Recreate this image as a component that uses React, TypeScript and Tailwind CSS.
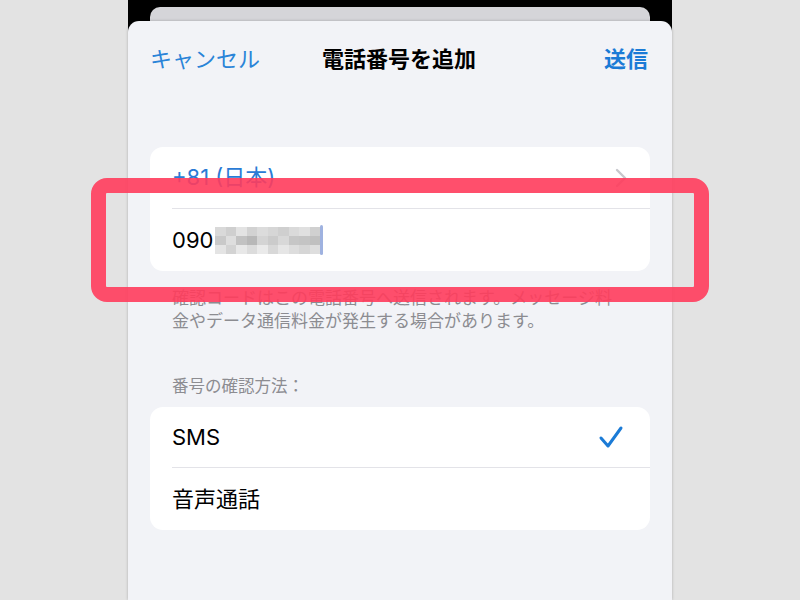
import React from 'react';

const font = { fontFamily: '"Inter", "Noto Sans CJK JP", sans-serif' };

// blurred phone digits, drawn as a mosaic of grey blocks
const mosaic = [
    ['#d9d9d9', '#cfcfcf', '#e3e3e3', '#d2d2d2', '#dcdcdc', '#d6d6d6', '#cfcfcf', '#dadada', '#e0e0e0', '#d0d0d0'],
    ['#c9c9c9', '#dedede', '#c2c2c2', '#b8b8b8', '#d4d4d4', '#cbcbcb', '#d8d8d8', '#c6c6c6', '#c4c4c4', '#c0c0c0'],
    ['#e4e4e4', '#d3d3d3', '#e8e8e8', '#dcdcdc', '#eaeaea', '#d8d8d8', '#e6e6e6', '#dddddd', '#d6d6d6', '#dedede'],
];

function Mosaic() {
    return (
        <div className="ml-[2px] flex items-center">
            <div className="flex flex-col">
                {mosaic.map((row, i) => (
                    <div key={i} className="flex">
                        {row.map((c, j) => (
                            <div key={j} className="h-[9px] w-[10.5px]" style={{ backgroundColor: c }} />
                        ))}
                    </div>
                ))}
            </div>
            <div className="h-[30px] w-[3px] rounded-full bg-[#9fb2e0]" />
        </div>
    );
}

export default function App() {
    return (
        <div className="relative flex h-[600px] w-full justify-center overflow-hidden bg-[#e3e3e3]" style={font}>
            <div className="flex w-[544px] flex-col bg-black">
                <div className="mx-[22px] mt-[7px] h-[14px] rounded-t-[10px] bg-[#d5d5d9]" />
                <div className="flex flex-1 flex-col rounded-t-[11px] bg-[#f2f3f7] shadow-[0_0_3px_rgba(0,0,0,0.25)]">
                    <div className="grid h-[76px] grid-cols-[1fr_auto_1fr] items-center pl-[22px] pr-[24px]">
                        <span className="text-[22px] text-[#2a84d8]">キャンセル</span>
                        <span className="text-[22px] font-bold text-black">電話番号を追加</span>
                        <span className="text-right text-[22px] font-bold text-[#1b7bd6]">送信</span>
                    </div>

                    <div className="mx-[22px] mt-[50px] rounded-[13px] bg-white">
                        <div className="flex h-[61px] items-center justify-between pl-[22px] pr-[22px]">
                            <span className="text-[22px] text-[#2a7bd5]">+81 (日本)</span>
                            <svg width="14" height="20" viewBox="0 0 14 20" fill="none">
                                <polyline points="3,2 11,10 3,18" stroke="#c7c7cc" strokeWidth="2.4" strokeLinecap="round" strokeLinejoin="round" />
                            </svg>
                        </div>
                        <div className="ml-[22px] h-px bg-[#e3e3e8]" />
                        <div className="flex h-[62px] items-center pl-[22px]">
                            <span className="text-[22px] text-black">090</span>
                            <Mosaic />
                        </div>
                    </div>

                    <p className="mt-[16px] pl-[44px] pr-[20px] text-[17px] leading-[23px] text-[#8c8c91]">
                        確認コードはこの電話番号へ送信されます。メッセージ料
                        <br />
                        金やデータ通信料金が発生する場合があります。
                    </p>

                    <p className="mt-[42px] pl-[44px] text-[16.5px] leading-[23px] text-[#8c8c91]">番号の確認方法：</p>

                    <div className="mx-[22px] mt-[9px] rounded-[13px] bg-white">
                        <div className="flex h-[60px] items-center justify-between pl-[22px] pr-[26px]">
                            <span className="text-[22px] text-black">SMS</span>
                            <svg width="26" height="24" viewBox="0 0 26 24" fill="none">
                                <polyline points="3,13 10,21 23,3" stroke="#1b7bd6" strokeWidth="3" strokeLinecap="round" strokeLinejoin="round" />
                            </svg>
                        </div>
                        <div className="ml-[22px] h-px bg-[#e3e3e8]" />
                        <div className="flex h-[62px] items-center pl-[22px]">
                            <span className="text-[22px] text-black">音声通話</span>
                        </div>
                    </div>
                </div>
            </div>

            {/* red highlight frame over the number field */}
            <div className="absolute left-[91px] top-[178px] h-[124px] w-[618px] rounded-[16px] border-[15px] border-[#ff3c5c]/90" />
        </div>
    );
}
